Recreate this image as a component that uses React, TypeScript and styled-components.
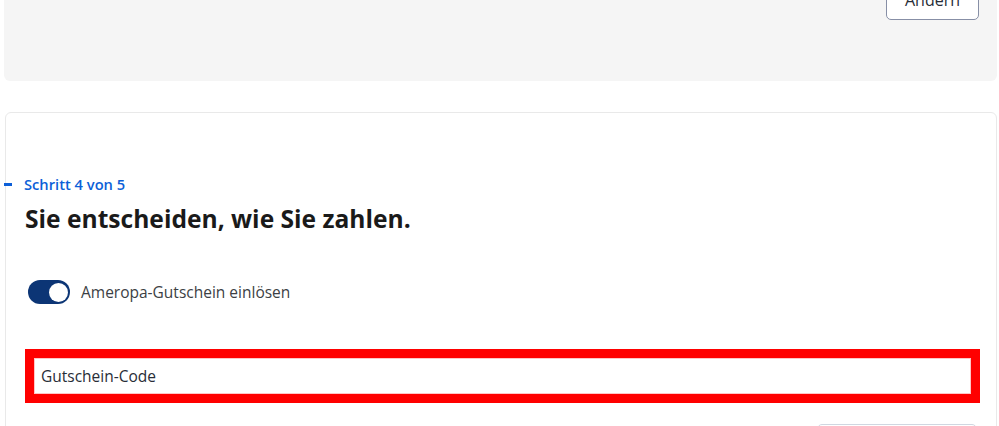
import * as React from 'react';
import styled, { createGlobalStyle } from 'styled-components';

const GlobalStyle = createGlobalStyle`
  html, body {
    margin: 0;
    padding: 0;
    background: #ffffff;
    font-family: "Open Sans", "Noto Sans", "Liberation Sans", sans-serif;
    color: #282d37;
  }
`;

const Page = styled.div`
  width: 999px;
  height: 426px;
  overflow: hidden;
  display: flex;
  flex-direction: column;
  padding: 0 2px 0 4px;
  box-sizing: border-box;
`;

const SummaryPanel = styled.section`
  flex-shrink: 0;
  margin-top: -40px;
  height: 121px;
  box-sizing: border-box;
  background: #f5f5f5;
  border-radius: 0 0 6px 6px;
  display: flex;
  justify-content: flex-end;
  align-items: flex-end;
  padding: 0 18px 61px 0;
`;

const OutlineButton = styled.button<{ muted?: boolean }>`
  flex-shrink: 0;
  height: 40px;
  width: ${({ muted }) => (muted ? 160 : 93)}px;
  box-sizing: border-box;
  border: 1px solid ${({ muted }) => (muted ? '#d0d7e1' : '#878fa6')};
  border-radius: 5px;
  background: #ffffff;
  font-family: inherit;
  font-size: 16px;
  color: #282d37;
  cursor: pointer;
`;

const StepCard = styled.section`
  flex-shrink: 0;
  margin-top: 31px;
  margin-left: 1px;
  border: 1px solid #e9e9e9;
  border-radius: 6px;
  padding: 61px 16px 0 19px;
`;

const StepRow = styled.div`
  display: flex;
  align-items: center;
  gap: 12px;
  margin-left: -21px;
  height: 20px;
`;

const StepMarker = styled.span`
  width: 8px;
  height: 3px;
  background: #0c5fd8;
`;

const StepLabel = styled.span`
  font-size: 14.7px;
  font-weight: 600;
  color: #0c5fd8;
`;

const Heading = styled.h2`
  margin: 9px 0 0;
  font-size: 24.6px;
  line-height: 32px;
  font-weight: 700;
  color: #1a1a1a;
`;

const ToggleRow = styled.label`
  display: flex;
  align-items: center;
  gap: 11px;
  margin: 45px 0 0 3px;
  font-size: 15.5px;
  color: #3c3f44;
`;

const Track = styled.span<{ on: boolean }>`
  width: 42px;
  height: 24px;
  box-sizing: border-box;
  border-radius: 12px;
  background: ${({ on }) => (on ? '#0c3575' : '#c7cbd2')};
  display: flex;
  align-items: center;
  justify-content: ${({ on }) => (on ? 'flex-end' : 'flex-start')};
  padding: 0 2px;
`;

const Knob = styled.span`
  width: 19px;
  height: 19px;
  border-radius: 50%;
  background: #ffffff;
`;

const VoucherFrame = styled.div`
  margin-top: 45px;
  border: 9px solid #ff0000;
`;

const VoucherInput = styled.input`
  display: block;
  width: 100%;
  height: 36px;
  box-sizing: border-box;
  border: 1px solid #ffc6c6;
  padding: 0 6px;
  font-family: inherit;
  font-size: 15.5px;
  color: #282d37;
  background: #ffffff;
  outline: none;
  &::placeholder {
    color: #282d37;
  }
`;

const Actions = styled.div`
  display: flex;
  justify-content: flex-end;
  margin-top: 21px;
  padding-right: 3px;
`;

export default function App() {
  const [redeem, setRedeem] = React.useState(true);

  return (
    <>
      <GlobalStyle />
      <Page>
        <SummaryPanel>
          <OutlineButton>Ändern</OutlineButton>
        </SummaryPanel>
        <StepCard>
          <StepRow>
            <StepMarker />
            <StepLabel>Schritt 4 von 5</StepLabel>
          </StepRow>
          <Heading>Sie entscheiden, wie Sie zahlen.</Heading>
          <ToggleRow onClick={() => setRedeem(!redeem)}>
            <Track on={redeem}>
              <Knob />
            </Track>
            Ameropa-Gutschein einlösen
          </ToggleRow>
          <VoucherFrame>
            <VoucherInput placeholder="Gutschein-Code" />
          </VoucherFrame>
          <Actions>
            <OutlineButton muted>Einlösen</OutlineButton>
          </Actions>
        </StepCard>
      </Page>
    </>
  );
}
